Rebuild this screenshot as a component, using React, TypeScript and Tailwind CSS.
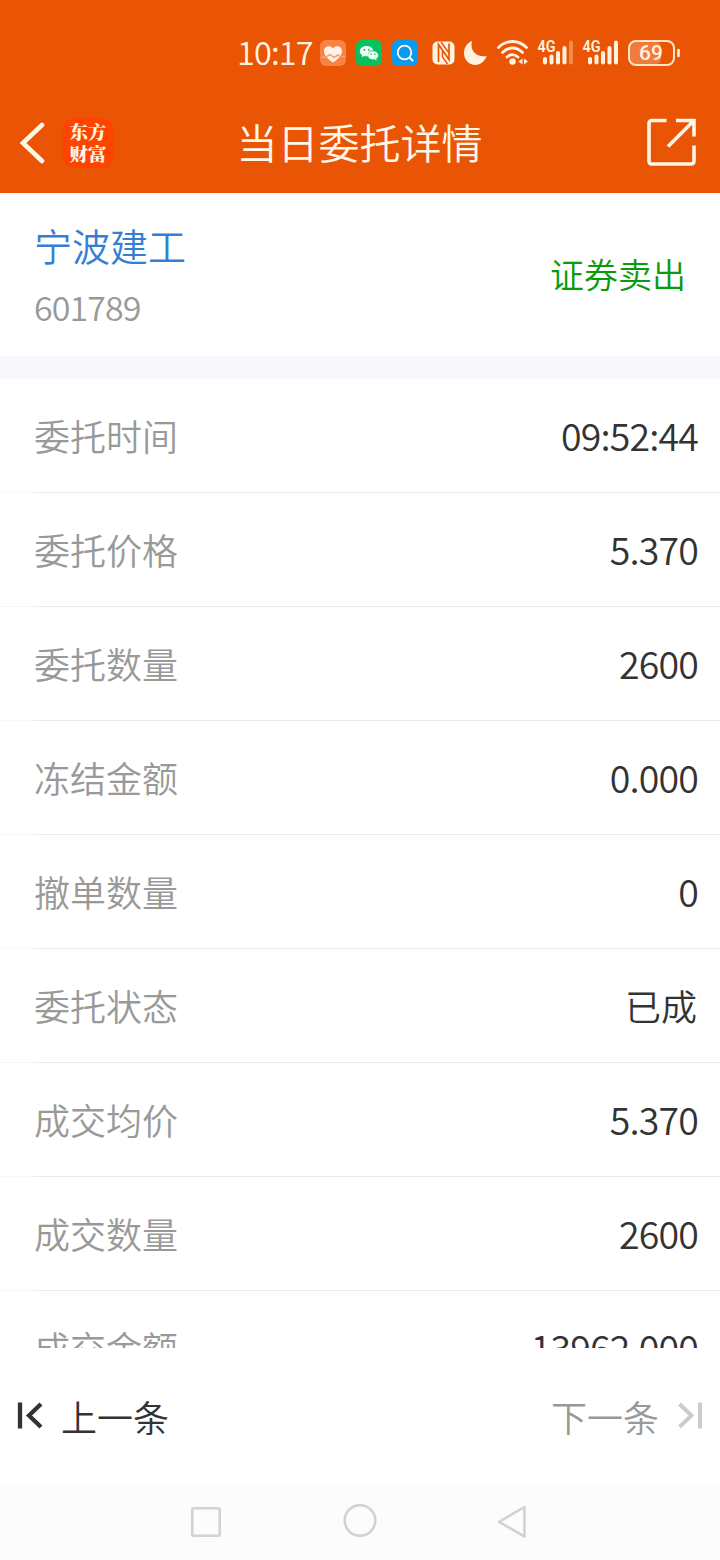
import React from "react";

const rows: [string, string][] = [
  ["委托时间", "09:52:44"],
  ["委托价格", "5.370"],
  ["委托数量", "2600"],
  ["冻结金额", "0.000"],
  ["撤单数量", "0"],
  ["委托状态", "已成"],
  ["成交均价", "5.370"],
  ["成交数量", "2600"],
  ["成交金额", "13962.000"],
];

function Signal({ weak }: { weak?: boolean }) {
  return (
    <svg className="h-[28px] w-[36px] shrink-0 overflow-visible" viewBox="0 0 36 28" fill="#fff3e0">
      <text x="-0.5" y="12.5" fontSize="16" fontWeight="600" fontFamily="Roboto, sans-serif" textLength="18" lengthAdjust="spacingAndGlyphs">4G</text>
      <rect x="5" y="18" width="4" height="7.5" rx="2" />
      <rect x="11.5" y="15.5" width="4" height="10" rx="2" />
      <rect x="18" y="12" width="4" height="13.5" rx="2" />
      <rect x="24.5" y="7" width="4" height="18.5" rx="2" />
      <rect x="31" y="1.5" width="4" height="24" rx="2" opacity={weak ? 0.35 : 1} />
    </svg>
  );
}

function StatusBar() {
  return (
    <div className="flex h-[105px] items-center pl-[237px] text-[#fff3e0]">
      <span className="w-[83px] shrink-0 pb-[3px] text-[32.500px] leading-[44px] tracking-[-0.9px] whitespace-nowrap">10:17</span>
      <svg className="mr-[10px] h-[26px] w-[26px] shrink-0" viewBox="0 0 26 26">
        <rect width="26" height="26" rx="6" fill="#f98345" />
        <path d="M13 22.500C8 19 4 15.500 4 11.200C4 6.200 10 4.600 13 8.300C16 4.600 22 6.200 22 11.200C22 15.500 18 19 13 22.500Z" fill="#fff3e8" />
        <path d="M1 17H6L10 14.500L14 17.500L18 15L20 16.500H25" fill="none" stroke="#f9a06c" strokeWidth="1.500" />
      </svg>
      <svg className="mr-[10px] h-[26px] w-[26px] shrink-0" viewBox="0 0 26 26">
        <rect width="26" height="26" rx="6" fill="#06c160" />
        <path d="M10.500 6C6.500 6 3.800 8.300 3.800 11.200C3.800 13 4.800 14.300 6.200 15.200L5.600 17.200L8.200 16C9.500 16.400 11 16.400 12 16.200C11.500 12.500 14 10.500 17.200 10.300C16.600 7.800 14 6 10.500 6Z" fill="#f4fff4" />
        <path d="M17 11.300C13.800 11.300 12 13.200 12 15.500C12 18 14.300 19.900 18.500 19.300L20.500 20.400L20.200 18.600C21.500 17.800 22.200 16.700 22.200 15.500C22.200 13.200 20 11.300 17 11.300Z" fill="#f4fff4" />
        <g fill="#06c160"><circle cx="8.300" cy="9.700" r="1" /><circle cx="12.800" cy="9.700" r="1" /><circle cx="15.300" cy="14.200" r=".8" /><circle cx="18.900" cy="14.200" r=".8" /></g>
      </svg>
      <svg className="mr-[14px] h-[26px] w-[26px] shrink-0" viewBox="0 0 26 26" fill="none" stroke="#fff" strokeLinecap="round">
        <rect width="26" height="26" rx="6" fill="#0a9bef" stroke="none" />
        <circle cx="12.500" cy="12.500" r="6.800" strokeWidth="1.800" />
        <path d="M17.700 17.700L20.500 20.500" strokeWidth="2.200" />
      </svg>
      <svg className="mr-[9px] h-[24px] w-[23px] shrink-0" viewBox="0 0 23 24">
        <rect x=".5" y=".5" width="22" height="23" rx="5" fill="#fff3e0" />
        <path d="M6.500 21V3.500L17 18.500V2.500" fill="none" stroke="#e95504" strokeWidth="1.700" />
        <path d="M9 1L17 12M10.500 10V16L15.500 23" fill="none" stroke="#e95504" strokeWidth="1.400" />
      </svg>
      <svg className="mr-[10px] h-[24px] w-[23px] shrink-0" viewBox="0 0 23 24">
        <path d="M8 0C5.500 9 12 17 22.700 15C20.500 20.500 16.500 24 11.500 24C5 24 0 18.800 0 12.300C0 6.500 3 2 8 0Z" fill="#fff3e0" />
      </svg>
      <svg className="mr-[10px] h-[26px] w-[31px] shrink-0" viewBox="0 0 31 26" fill="none" stroke="#fff3e0" strokeWidth="2.800" strokeLinecap="round">
        <path d="M1.500 7.500C9.500 -.5 21.500 -.5 29.500 7.500M5.500 12.500C11.500 6.500 19.500 6.500 25.500 12.500M10 17C13.500 14 17.500 14 21 17" />
        <circle cx="15.500" cy="21.500" r="3.200" fill="#fff3e0" stroke="none" />
        <path d="M25.500 18.500V24.500L21.500 21.500ZM27 18.500V24.500L31 21.500Z" fill="#fff3e0" stroke="none" />
      </svg>
      <div className="mr-[9px] flex"><Signal weak /></div>
      <div className="mr-[9px] flex"><Signal /></div>
      <svg className="h-[26px] w-[53px] shrink-0" viewBox="0 0 53 26">
        <rect x="2" y="2" width="31" height="22" rx="5" fill="#f07b3c" />
        <rect x="1" y="1" width="45" height="24" rx="7" fill="none" stroke="#ffe6c4" strokeWidth="2" />
        <path d="M50.500 10V16" stroke="#fff3e0" strokeWidth="2.500" strokeLinecap="round" />
        <text x="23" y="20" textAnchor="middle" fontSize="21" fontWeight="500" fontFamily="Roboto, sans-serif" fill="#fff3e0">69</text>
      </svg>
    </div>
  );
}

export default function App() {
  return (
    <div className="flex h-[1560px] w-[720px] flex-col overflow-hidden bg-white font-['Noto_Sans_CJK_SC',sans-serif] font-[350]">
      <header className="h-[193px] shrink-0 bg-[#e95504]">
        <StatusBar />
        <div className="grid h-[76px] grid-cols-[1fr_auto_1fr] items-center pr-[24px] pl-[19px] text-[#fff6e8]">
          <div className="flex items-center">
            <svg className="mr-[18px] h-[44px] w-[26px]" viewBox="0 0 26 44" fill="none" stroke="currentColor" strokeWidth="4.600" strokeLinecap="round" strokeLinejoin="miter">
              <path d="M23 4L4 22L23 40" />
            </svg>
            <div className="flex h-[50px] w-[50px] flex-col items-center justify-center rounded-[10px] bg-[#ff4400] pb-[3px] font-['Noto_Serif_CJK_SC','Noto_Sans_CJK_SC',sans-serif] text-[18.500px] leading-[22px] font-black">
              <span>东方</span>
              <span>财富</span>
            </div>
          </div>
          <h1 className="pb-[4px] pl-[4px] text-[41px] leading-[56px] whitespace-nowrap">当日委托详情</h1>
          <svg className="h-[50px] w-[50px] justify-self-end" viewBox="0 0 50 50" fill="none" stroke="currentColor" strokeWidth="3.600">
            <path d="M20.500 2.500H6Q3 2.500 3 5.500V43Q3 46 6 46H45Q48 46 48 43V27.500M30 2.500H48V18.500M47 3.500L22 28.500" />
          </svg>
        </div>
      </header>

      <section className="flex h-[163px] shrink-0 items-center justify-between pr-[34px] pl-[34px]">
        <div className="pt-[7px]">
          <div className="text-[38px] leading-[56px] text-[#357fd3]">宁波建工</div>
          <div className="text-[34px] leading-[67px] tracking-[-0.9px] text-[#999]">601789</div>
        </div>
        <div className="pb-[2px] text-[34px] leading-[48px] text-[#0a9b0a]">证券卖出</div>
      </section>
      <div className="h-[23px] shrink-0 bg-[#f6f8fb]" />

      <main className="h-[969px] shrink-0 overflow-hidden">
        {rows.map(([label, value]) => (
          <div key={label}>
            <div className="flex h-[113px] items-center justify-between pr-[23px] pb-px pl-[34px] text-[36px] leading-[52px]">
              <span className="text-[#999]">{label}</span>
              <span className={value === "已成" ? "text-[#333]" : "-mr-px text-[37.500px] tracking-[-0.85px] text-[#333]"}>{value}</span>
            </div>
            <div className="flex h-px">
              <div className="w-[34px] bg-[#f7f7f7]" />
              <div className="flex-1 bg-[#ebebeb]" />
            </div>
          </div>
        ))}
      </main>

      <footer className="flex h-[135px] shrink-0 items-center justify-between px-[17px] text-[36px] leading-[52px]">
        <div className="flex items-center text-[#333]">
          <svg className="mr-[17px] h-[28px] w-[27px]" viewBox="0 0 27 28" fill="none" stroke="currentColor" strokeWidth="4.300">
            <path d="M3 .5V26.500M24 2L12 13.500L24 25" />
          </svg>
          <span>上一条</span>
        </div>
        <div className="flex items-center text-[#999]">
          <span>下一条</span>
          <svg className="ml-[18px] h-[28px] w-[26px] text-[#ccc]" viewBox="0 0 26 28" fill="none" stroke="currentColor" strokeWidth="4">
            <path d="M23 .5V26.500M2.500 2L14.500 13.500L2.500 25" />
          </svg>
        </div>
      </footer>

      <nav className="flex h-[77px] shrink-0 items-center bg-[#fcfcfc] pb-[2px] pl-[190px]">
        <svg className="mr-[121px] h-[34px] w-[32px]" viewBox="0 0 32 34" fill="none" stroke="#d2d2d2" strokeWidth="2.600">
          <rect x="2.300" y="4.300" width="27.400" height="27.400" rx="1.500" />
        </svg>
        <svg className="mr-[120px] h-[34px] w-[34px]" viewBox="0 0 34 34" fill="none" stroke="#d2d2d2" strokeWidth="2.600">
          <circle cx="17" cy="16.500" r="15.300" />
        </svg>
        <svg className="h-[34px] w-[30px]" viewBox="0 0 30 34" fill="none" stroke="#d2d2d2" strokeWidth="2.600" strokeLinejoin="round">
          <path d="M27.500 3V32.500L2 17.800Z" />
        </svg>
      </nav>
    </div>
  );
}
